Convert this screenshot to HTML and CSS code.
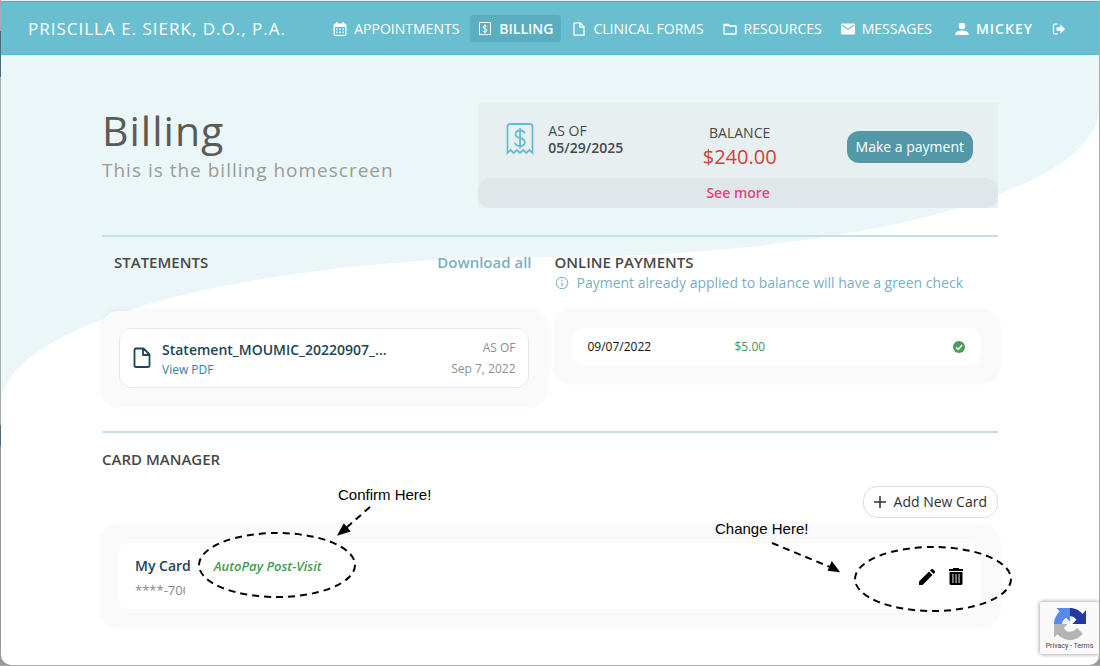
FILE: index.html
```
<!DOCTYPE html>
<html lang="en">
  <head>
    <meta charset="UTF-8" />
    <meta name="viewport" content="width=device-width, initial-scale=1.0" />
    <title>Billing</title>
    <link rel="stylesheet" href="styles.css">
  </head>
  <body>
    <div class="window">
      <header class="topbar">
        <a class="brand" href="#">PRISCILLA E. SIERK, D.O., P.A.</a>
        <nav class="nav">
          <a class="nav-link" href="#">
            <svg class="icon" viewBox="0 0 14 14"><path fill="currentColor" fill-rule="evenodd" d="M3 0h1.500v1.500h5V0H11v1.500h1Q13.500 1.500 13.500 3v9.500q0 1.500-1.500 1.500H2Q.5 14 .5 12.500V3Q.5 1.500 2 1.500h1zM1.800 5v7.700h10.400V5zM3 6.500h1.500V8H3zm3.200 0h1.500V8H6.200zm3.300 0H11V8H9.500zM3 9.500h1.500V11H3zm3.200 0h1.500V11H6.200zm3.300 0H11V11H9.500z"/></svg>
            APPOINTMENTS
          </a>
          <a class="nav-link active" href="#">
            <svg class="icon" viewBox="0 0 14 14"><g fill="none" stroke="currentColor"><path d="M1.500 13V.5h11V13l-1.800-1-1.800 1-1.900-1-1.900 1-1.800-1z"/><path d="M9 4.500Q8.500 3.500 7 3.500T5 5q0 1.200 2 1.700t2 1.800Q9 10 7 10T4.800 8.800M7 2.300v9"/></g></svg>
            BILLING
          </a>
          <a class="nav-link" href="#">
            <svg class="icon" viewBox="0 0 14 14"><path fill="none" stroke="currentColor" stroke-width="1.300" stroke-linejoin="round" d="M3 .8h5l4 4v8.400H2V1.800q0-1 1-1zM7.800 1v4H12"/></svg>
            CLINICAL FORMS
          </a>
          <a class="nav-link" href="#">
            <svg class="icon" viewBox="0 0 14 14"><path fill="none" stroke="currentColor" stroke-width="1.300" stroke-linejoin="round" d="M1 2.500h4.500L7 4h6v8H1z"/><path fill="currentColor" d="M1 2h4.500l1.700 2.300H1z"/></svg>
            RESOURCES
          </a>
          <a class="nav-link" href="#">
            <svg class="icon" viewBox="0 0 14 14"><path fill="currentColor" d="M1 1.500h12q1 0 1 1v9q0 1-1 1H1q-1 0-1-1v-9q0-1 1-1z"/><path fill="none" stroke="#69bfd0" stroke-width="1.300" d="M1 3.300l6 3.900 6-3.900"/></svg>
            MESSAGES
          </a>
          <a class="nav-link user" href="#">
            <svg class="icon" viewBox="0 0 14 14"><circle cx="7" cy="4" r="3.300" fill="currentColor"/><path fill="currentColor" d="M.5 13v-1.600Q1 8.800 7 8.600q6 .2 6.500 2.800V13z"/></svg>
            MICKEY
          </a>
          <a class="nav-link" href="#" aria-label="Log out">
            <svg class="icon" viewBox="0 0 14 14"><path fill="none" stroke="currentColor" stroke-width="1.300" d="M5.500 2.200H2.800q-1.300 0-1.300 1.300v7q0 1.300 1.300 1.300h2.700"/><path fill="currentColor" d="M4.500 5.200h3.800V2.300L13 7l-4.700 4.700V8.800H4.500z"/></svg>
          </a>
        </nav>
      </header>

      <div class="page">
        <svg class="wave" viewBox="0 0 1100 350" preserveAspectRatio="none" aria-hidden="true"><path fill="#eaf6f8" d="M0 0H1100V54A550 148 0 0 1 550 202A550 148 0 0 0 0 350Z"/></svg>

        <main class="content">
          <section class="intro">
            <div class="heading">
              <h1>Billing</h1>
              <p>This is the billing homescreen</p>
            </div>
            <div class="summary">
              <div class="summary-main">
                <div class="as-of">
                  <svg class="receipt" viewBox="0 0 28 32"><g fill="none" stroke="#63bfd2" stroke-width="1.800"><path d="M1.500 30V3.500q0-2.500 2.500-2.500h20q2.500 0 2.500 2.500V30l-3-3-3.200 3-3.200-3-3.100 3-3.100-3-3.200 3-3.200-3z"/><path d="M18.500 10.500Q18 7.500 14 7.500T9.500 11q0 3 4.500 4t4.800 4.400Q18.800 23 14 23t-5-3.500M14 5v20.500"/></g></svg>
                  <div>AS OF<br /><b>05/29/2025</b></div>
                </div>
                <div class="balance">
                  <div>BALANCE</div>
                  <strong>$240.00</strong>
                </div>
                <button class="pay">Make a payment</button>
              </div>
              <button class="see-more">See more</button>
            </div>
          </section>

          <section class="columns">
            <div class="statements">
              <div class="section-head indent">
                <h2>STATEMENTS</h2>
                <a href="#">Download all</a>
              </div>
              <div class="panel">
                <div class="statement">
                  <svg class="file" viewBox="0 0 18 22"><path fill="none" stroke="#1b4558" stroke-width="1.800" stroke-linejoin="round" d="M3 1.500h7.500l6 6v11q0 1.500-1.500 1.500H3q-1.500 0-1.500-1.500V3Q1.500 1.500 3 1.500zM10 2v6h6"/></svg>
                  <div class="statement-name">
                    <b>Statement_MOUMIC_20220907_...</b>
                    <a href="#">View PDF</a>
                  </div>
                  <div class="statement-date">AS OF<br />Sep 7, 2022</div>
                </div>
              </div>
            </div>

            <div class="payments">
              <div class="section-head">
                <h2>ONLINE PAYMENTS</h2>
              </div>
              <p class="note">
                <svg class="info" viewBox="0 0 14 14"><circle cx="7" cy="7" r="5.800" fill="none" stroke="currentColor"/><path stroke="currentColor" stroke-width="1.200" d="M7 6.200v4M7 3.800V5"/></svg>
                Payment already applied to balance will have a green check
              </p>
              <div class="panel">
                <div class="payment">
                  <span>09/07/2022</span>
                  <span class="amount">$5.00</span>
                  <svg class="check" viewBox="0 0 12 12"><circle cx="6" cy="6" r="6" fill="#4b9c58"/><path fill="none" stroke="#fff" stroke-width="1.400" d="M3 6.200l2.200 2.200L9.200 4"/></svg>
                </div>
              </div>
            </div>
          </section>

          <section class="cards">
            <h2>CARD MANAGER</h2>
            <button class="add-card">
              <svg class="plus" viewBox="0 0 12 12"><path stroke="currentColor" stroke-width="1.500" d="M6 0v12M0 6h12"/></svg>
              Add New Card
            </button>
            <div class="panel">
              <div class="card">
                <div class="card-name">
                  <b>My Card</b>
                  <span class="digits">****-7000</span>
                </div>
                <em>AutoPay Post-Visit</em>
                <div class="card-actions">
                  <button aria-label="Edit card">
                    <svg viewBox="0 0 18 18"><path d="M1 17v-3.500L11 3.500 14.500 7l-10 10zM12 2.500l1.300-1.300q.8-.7 1.600 0l1.900 1.900q.7.800 0 1.600L15.500 6z"/></svg>
                  </button>
                  <button aria-label="Delete card">
                    <svg viewBox="0 0 18 18"><path d="M6 0h6v1h4v2H2V1h4z"/><path fill-rule="evenodd" d="M2.500 4h13v11.500q0 1.500-1.500 1.500H4q-1.500 0-1.500-1.500zM5.500 6v9h.9V6zm3.100 0v9h.9V6zm3 0v9h.9V6z"/></svg>
                  </button>
                </div>
              </div>
            </div>

            <!-- callouts over the card row -->
            <div class="callout callout-confirm">
              <span>Confirm Here!</span>
              <svg viewBox="0 0 260 125"><ellipse cx="87" cy="85" rx="78" ry="32"/><path d="M180 27l-24 21"/><path class="tip" d="M149 54l5-9 5 6z"/></svg>
            </div>
            <div class="callout callout-change">
              <span>Change Here!</span>
              <svg viewBox="0 0 310 105"><ellipse cx="223" cy="69" rx="78" ry="32"/><path d="M62 33l58 24"/><path class="tip" d="M128 61l-9-1 3-7z"/></svg>
            </div>
          </section>
        </main>

        <aside class="recaptcha">
          <svg viewBox="0 0 64 64"><path fill="#2438a0" d="M64 31.955l-.033-1.370V4.687l-7.160 7.160C50.948 4.674 42.033.093 32.050.093c-10.400 0-19.622 4.960-25.458 12.640l11.736 11.860a15.550 15.550 0 0 1 4.754-5.334c2.050-1.600 4.952-2.906 8.968-2.906.485 0 .86.057 1.135.163 4.976.393 9.288 3.140 11.828 7.124l-8.307 8.307z"/><path fill="#568bea" d="M31.862.094l-1.370.033H4.594l7.160 7.160C4.580 13.147 0 22.060 0 32.046c0 10.400 4.960 19.622 12.640 25.458L24.500 45.768a15.550 15.550 0 0 1-5.334-4.754c-1.600-2.050-2.906-4.952-2.906-8.968 0-.485.057-.86.163-1.135.393-4.976 3.140-9.288 7.124-11.828l8.307 8.307z"/><path fill="#b4b4b4" d="M0 32.045l.033 1.370v25.898l7.160-7.160c5.860 7.173 14.774 11.754 24.760 11.754 10.400 0 19.622-4.960 25.458-12.640l-11.736-11.860a15.550 15.550 0 0 1-4.754 5.334c-2.050 1.600-4.952 2.906-8.968 2.906-.485 0-.86-.057-1.135-.163-4.976-.393-9.288-3.140-11.828-7.124l8.307-8.307z"/></svg>
          <div><a href="#">Privacy</a> - <a href="#">Terms</a></div>
        </aside>
      </div>
    </div>
  </body>
</html>
```
FILE: styles.css
```
* {
  box-sizing: border-box;
  margin: 0;
}

body {
  background: linear-gradient(#aaa 31px, #4b6d7b 31px, #4b6d7b 77px, #aaa 77px, #aaa 425px, #4b6d7b 425px, #4b6d7b 446px, #999 446px);
  color: #484848;
  font-family: "Open Sans", "Noto Sans", sans-serif;
  font-size: 14px;
  line-height: 20px;
}

a {
  color: inherit;
  text-decoration: none;
}

button {
  border: none;
  font: inherit;
  cursor: pointer;
}

b {
  font-weight: 600;
}

svg {
  display: block;
  flex: none;
}

h2 {
  font-size: 15px;
  font-weight: 600;
  line-height: 20px;
}

.window {
  display: flex;
  flex-direction: column;
  min-height: calc(100vh - 1px);
  margin-left: 1px;
  border-top: 1px solid #e8f3f5;
  border-right: 1px solid #aaa;
  border-radius: 0 0 10px 10px;
  background: #fff;
  overflow: hidden;
}

/* top bar */
.topbar {
  display: flex;
  align-items: center;
  justify-content: space-between;
  height: 54px;
  padding: 1px 25px 0 27px;
  border-top: 1px solid #4bafc0;
  border-bottom: 1px solid #53b9cc;
  background: #69bfd0;
  color: #fff;
}

.brand {
  font-size: 17px;
  letter-spacing: 1px;
  white-space: nowrap;
}

.nav {
  display: flex;
  gap: 3px;
}

.nav-link {
  display: flex;
  align-items: center;
  gap: 7px;
  height: 27px;
  padding: 0 8px;
  border-radius: 4px;
  white-space: nowrap;
}

.nav-link.active {
  background: #5badc0;
  font-weight: 600;
}

.nav-link.user {
  margin-left: 4px;
  font-weight: 600;
  letter-spacing: 1px;
}

.icon {
  width: 14px;
  height: 14px;
}

.page {
  position: relative;
  flex: 1;
}

.wave {
  position: absolute;
  top: 0;
  left: 0;
  width: 100%;
  height: 350px;
}

.content {
  position: relative;
  max-width: 896px;
  margin: 0 auto;
  padding-top: 48px;
}

/* title and balance */
.intro {
  display: flex;
  justify-content: space-between;
  padding-bottom: 27px;
  border-bottom: 2px solid #c5dfe7;
}

h1 {
  padding-top: 2px;
  color: #5b5b56;
  font-size: 41px;
  font-weight: 400;
  letter-spacing: 1px;
  line-height: 51px;
}

.heading p {
  color: #9b9b96;
  font-size: 19px;
  letter-spacing: 1px;
  line-height: 28px;
}

.summary {
  width: 58%;
  background: #e8eff1;
}

.summary-main {
  display: grid;
  grid-template-columns: 1fr auto 1fr;
  align-items: center;
  height: 75px;
  padding: 12px 25px 0 28px;
}

.as-of {
  display: flex;
  align-items: center;
  gap: 14px;
  padding-bottom: 16px;
  line-height: 17px;
}

.receipt {
  width: 28px;
  height: 32px;
}

.balance {
  text-align: center;
}

.balance strong {
  color: #d23f3b;
  font-size: 20px;
  font-weight: 400;
  line-height: 28px;
}

.pay {
  justify-self: end;
  height: 32px;
  padding: 0 9px;
  border-radius: 12px;
  background: #5298a7;
  color: #fff;
  white-space: nowrap;
}

.see-more {
  display: block;
  width: 100%;
  height: 30px;
  border-radius: 12px;
  background: #dee8ea;
  color: #e0457f;
  font-weight: 600;
}

/* statements and payments */
.columns {
  display: grid;
  grid-template-columns: 1fr 1fr;
  gap: 9px;
  align-items: start;
  padding: 15px 0 26px;
  border-bottom: 2px solid #c5e0e5;
}

.section-head {
  display: flex;
  justify-content: space-between;
}

.section-head.indent {
  padding: 0 14px 39px 12px;
}

.section-head a {
  color: #7aafc6;
  font-size: 15px;
  font-weight: 600;
}

.panel {
  padding: 17px;
  border-radius: 16px;
  background: #fafafa;
  box-shadow: 0 0 6px rgba(0, 0, 0, 0.06);
}

.statement {
  display: flex;
  align-items: center;
  gap: 11px;
  height: 60px;
  padding: 0 12px 0 13px;
  border: 1px solid #e8e8e8;
  border-radius: 12px;
  background: #fff;
}

.file {
  width: 18px;
  height: 22px;
}

.statement-name {
  flex: 1;
  padding-top: 3px;
  color: #1b4558;
}

.statement-name a {
  display: block;
  color: #34809f;
  font-size: 12px;
}

.statement-date {
  color: #909090;
  font-size: 12px;
  line-height: 21px;
  text-align: right;
}

.note {
  display: flex;
  align-items: center;
  gap: 8px;
  padding: 1px 0 18px;
  color: #7aafc6;
}

.info {
  width: 14px;
  height: 14px;
}

.payment {
  display: grid;
  grid-template-columns: 147px 1fr auto;
  align-items: center;
  height: 37px;
  padding: 0 16px;
  border-radius: 12px;
  background: #fff;
  color: #111;
  font-size: 12px;
}

.amount {
  color: #3f9a50;
}

.check {
  width: 12px;
  height: 12px;
}

/* card manager */
.cards {
  position: relative;
  padding-top: 16px;
}

.add-card {
  display: flex;
  align-items: center;
  gap: 8px;
  height: 32px;
  margin: 17px 0 8px auto;
  padding: 0 10px;
  border: 1px solid #ddd;
  border-radius: 14px;
  background: #fff;
  color: #2f2f2f;
}

.plus {
  width: 12px;
  height: 12px;
}

.card {
  display: flex;
  gap: 23px;
  height: 66px;
  padding: 13px 16px 11px;
  border-radius: 12px;
  background: #fff;
}

.card-name {
  color: #1b4558;
}

.digits {
  display: block;
  width: 50px;
  padding-top: 4px;
  overflow: hidden;
  color: #888;
  font-size: 13px;
}

.card em {
  flex: 1;
  color: #3f9a50;
  font-size: 13px;
  font-weight: 600;
}

.card-actions {
  display: flex;
  align-items: center;
  gap: 11px;
}

.card-actions button {
  padding: 0;
  background: none;
}

.card-actions svg {
  width: 18px;
  height: 18px;
}

.callout {
  position: absolute;
  color: #000;
  font-family: "Liberation Sans", Arial, sans-serif;
  font-size: 15px;
  pointer-events: none;
}

.callout span {
  position: absolute;
}

.callout svg {
  width: 100%;
  fill: none;
  stroke: #000;
  stroke-width: 2;
  stroke-dasharray: 7 5;
}

.callout .tip {
  fill: #000;
  stroke-dasharray: none;
}

.callout-confirm {
  top: 47px;
  left: 88px;
  width: 260px;
}

.callout-confirm span {
  top: 5px;
  left: 148px;
}

.callout-change {
  top: 77px;
  right: -22px;
  width: 310px;
}

.callout-change span {
  top: 9px;
  left: 5px;
}

.recaptcha {
  position: absolute;
  right: 0;
  bottom: 11px;
  width: 59px;
  height: 52px;
  padding-top: 6px;
  border-radius: 2px;
  background: #f9f9f9;
  box-shadow: 0 0 4px #888;
  color: #444;
  font-family: Roboto, sans-serif;
  font-size: 7px;
  line-height: 12px;
  text-align: center;
}

.recaptcha svg {
  width: 32px;
  height: 32px;
  margin: 0 auto;
}
```
